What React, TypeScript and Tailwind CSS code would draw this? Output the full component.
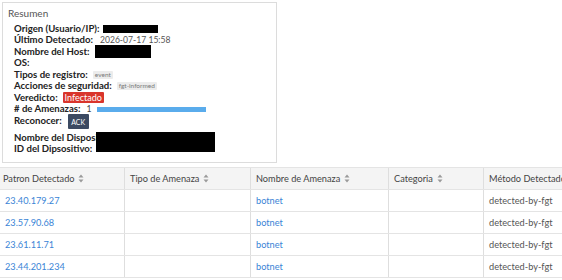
import React from "react";

interface Row {
  ip: string;
  name: string;
  method: string;
}

const rows: Row[] = [
  { ip: "23.40.179.27", name: "botnet", method: "detected-by-fgt" },
  { ip: "23.57.90.68", name: "botnet", method: "detected-by-fgt" },
  { ip: "23.61.11.71", name: "botnet", method: "detected-by-fgt" },
  { ip: "23.44.201.234", name: "botnet", method: "detected-by-fgt" },
];

const SortIcon = () => (
  <svg width="6" height="9" viewBox="0 0 6 9" className="ml-[4px] shrink-0">
    <path d="M3 0.5 L5.5 3.5 H0.5 Z" fill="#9a9a9a" />
    <path d="M3 8.5 L5.5 5.5 H0.5 Z" fill="#9a9a9a" />
  </svg>
);

const Tag = ({ children }: { children: React.ReactNode }) => (
  <span className="ml-[5px] inline-flex h-[8px] items-center rounded-[1px] bg-[#ececec] px-[2px] text-[6.5px] font-normal text-[#7a7a7a]">
    {children}
  </span>
);

const Field = ({ label, children }: { label: string; children?: React.ReactNode }) => (
  <div className="flex h-[11.5px] items-center whitespace-nowrap">
    <span className="font-bold text-[#222]">{label}</span>
    {children}
  </div>
);

const columns = [
  { title: "Patron Detectado", w: "w-[124px]" },
  { title: "Tipo de Amenaza", w: "w-[126px]" },
  { title: "Nombre de Amenaza", w: "w-[138px]" },
  { title: "Categoria", w: "w-[95px]" },
  { title: "Método Detectado", w: "w-[140px]" },
];

const App = () => {
  return (
    <div
      className="h-[280px] w-[562px] overflow-hidden bg-white"
      style={{ fontFamily: "Lato, 'Liberation Sans', sans-serif" }}
    >
      <div className="pl-[2px] pt-[2px]">
        <div className="relative h-[161px] w-[275px] border border-[#dcdcdc] px-[5px] pt-[4px] text-[9.6px] leading-[12px]">
          <div className="text-[10px] text-[#555]">Resumen</div>
          <div className="mt-[4px] pl-[6px]">
            <Field label="Origen (Usuario/IP):">
              <span className="ml-[4px] inline-block h-[8px] w-[55px] bg-black" />
            </Field>
            <Field label="Último Detectado:">
              <span className="ml-[7px] text-[8.6px] text-[#555]">2026-07-17 15:58</span>
            </Field>
            <Field label="Nombre del Host:">
              <span className="ml-[6px] inline-block h-[13px] w-[56px] bg-black" />
            </Field>
            <Field label="OS:" />
            <Field label="Tipos de registro:">
              <Tag>event</Tag>
            </Field>
            <Field label="Acciones de seguridad:">
              <Tag>fgt-informed</Tag>
            </Field>
            <Field label="Veredicto:">
              <span className="ml-[5px] inline-flex h-[11px] items-center rounded-[1px] bg-[#d9352c] px-[2px] text-[9px] font-normal text-white">
                Infectado
              </span>
            </Field>
            <Field label="# de Amenazas:">
              <span className="ml-[6px] text-[8.6px] text-[#444]">1</span>
              <span className="ml-[5px] inline-block h-[5px] w-[109px] bg-[#5aacec]" />
            </Field>
            <div className="flex h-[17px] items-start whitespace-nowrap">
              <span className="font-bold text-[#222]">Reconocer:</span>
              <span className="ml-[6px] mt-[-1px] inline-flex h-[15px] w-[21px] items-center justify-center rounded-[1px] bg-[#3c4a62] text-[7px] text-white">
                ACK
              </span>
            </div>
            <Field label="Nombre del Dispositivo:" />
            <Field label="ID del Dipsositivo:" />
          </div>
          <span className="absolute left-[93px] top-[129px] h-[20px] w-[119px] bg-black" />
        </div>
      </div>

      <div className="mt-[4px] w-[623px] text-[9.2px]">
        <div className="flex h-[23px] border-y border-[#e4e4e4] bg-[#f4f4f4] text-[#444]">
          {columns.map((c, i) => (
            <div
              key={c.title}
              className={`${c.w} flex shrink-0 items-center whitespace-nowrap ${i === 0 ? "pl-[3px]" : "border-l border-[#dedede] pl-[5px]"}`}
            >
              {c.title}
              {i < 4 && <SortIcon />}
            </div>
          ))}
        </div>
        {rows.map((r) => (
          <div key={r.ip} className="flex h-[22px] border-b border-[#e4e4e4]">
            <div className="flex w-[124px] shrink-0 items-center pl-[5px] text-[#3a84d6]">{r.ip}</div>
            <div className="w-[126px] shrink-0 border-l border-[#dedede]" />
            <div className="flex w-[138px] shrink-0 items-center border-l border-[#dedede] pl-[5px] text-[#3a84d6]">
              {r.name}
            </div>
            <div className="w-[95px] shrink-0 border-l border-[#dedede]" />
            <div className="flex w-[140px] shrink-0 items-center border-l border-[#dedede] pl-[5px] text-[#555]">
              {r.method}
            </div>
          </div>
        ))}
      </div>
    </div>
  );
};

export default App;
